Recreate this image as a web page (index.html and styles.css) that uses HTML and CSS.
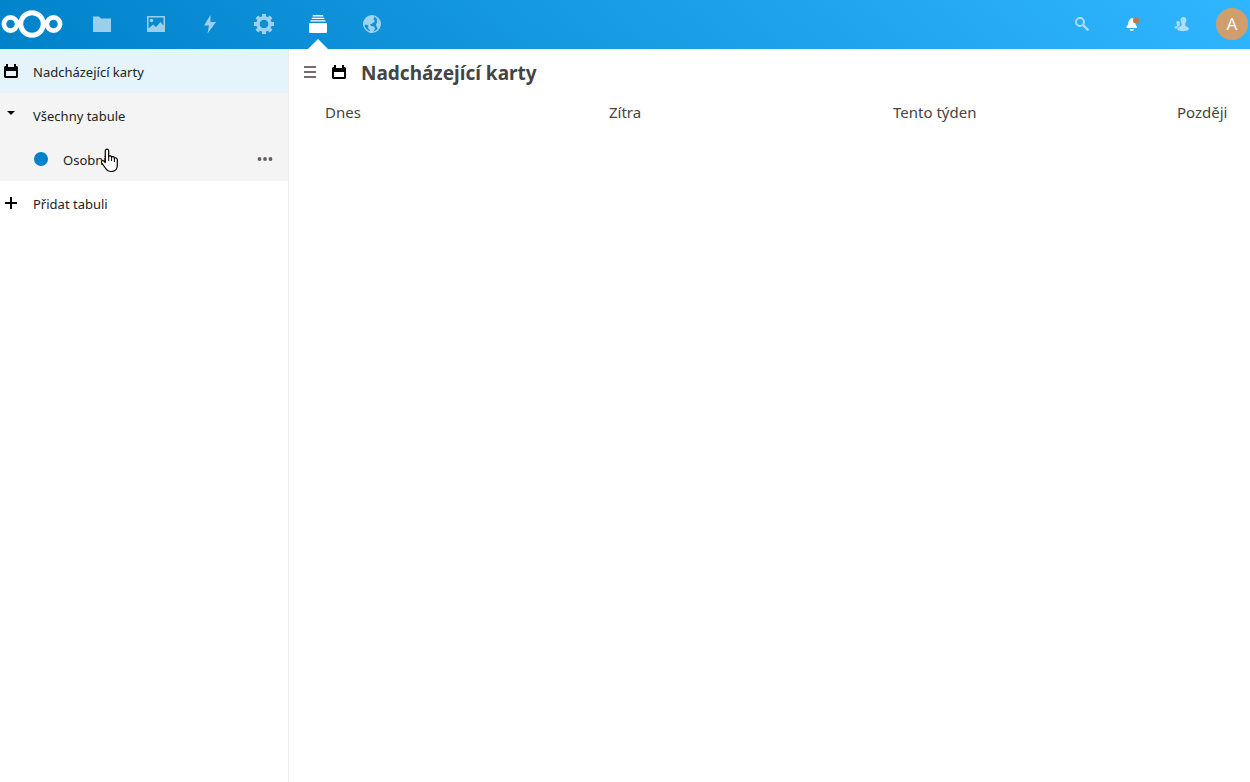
FILE: index.html
```html
<!DOCTYPE html>
<html lang="cs">
<head>
<meta charset="utf-8">
<title>Deck</title>
<link rel="stylesheet" href="styles.css">
</head>

<body>

<header class="header">
	<a class="logo" href="#" aria-label="Nextcloud">
		<svg width="62" height="30" viewBox="0 0 62 30" fill="none" stroke="#fff">
			<circle cx="31" cy="15" r="11.3" stroke-width="5"/>
			<circle cx="9.500" cy="15" r="6.600" stroke-width="4.700"/>
			<circle cx="52.500" cy="15" r="6.600" stroke-width="4.700"/>
		</svg>
	</a>

	<nav class="apps">
		<a class="app" href="#" aria-label="Soubory">
			<svg width="20" height="20" viewBox="0 0 20 20" fill="#fff"><path d="M1 2.500h6l2 2h10V18H1z"/></svg>
		</a>
		<a class="app" href="#" aria-label="Fotky">
			<svg width="20" height="20" viewBox="0 0 20 20" fill="#fff">
				<path fill-rule="evenodd" d="M1 2h18v16H1zM2.500 3.500v11L7 10.500l3 2.500 4.500-5 3 3.500v-8z"/>
				<circle cx="5.500" cy="6.500" r="1.800"/>
			</svg>
		</a>
		<a class="app" href="#" aria-label="Aktivita">
			<svg width="20" height="20" viewBox="0 0 20 20" fill="#fff"><path d="M10.500 1L4 11.500h5L7.500 19.500 16 8h-5.500z"/></svg>
		</a>
		<a class="app" href="#" aria-label="Nastavení">
			<svg width="20" height="20" viewBox="0 0 20 20" fill="#fff" stroke="#fff">
				<circle cx="10" cy="10" r="6" fill="none" stroke-width="3.400"/>
				<path stroke-width="4" fill="none" d="M10 0v3.500M10 16.500V20M0 10h3.500M16.500 10H20M2.900 2.900l2.300 2.300M14.800 14.800l2.300 2.300M2.900 17.100l2.300-2.300M14.800 5.200l2.300-2.300"/>
			</svg>
		</a>
		<a class="app active" href="#" aria-label="Deck">
			<svg width="20" height="20" viewBox="0 0 20 20" fill="#fff">
				<path d="M5 1h10l.5 1.500h-11z"/>
				<path d="M4 3.700h12l.5 1.300h-13z"/>
				<path d="M2.800 6.200h14.400l.5 1.300H2.300z"/>
				<rect x="1" y="9" width="18" height="10" rx="1"/>
			</svg>
		</a>
		<a class="app" href="#" aria-label="Web">
			<svg width="20" height="20" viewBox="0 0 20 20">
				<circle cx="10" cy="10" r="8.300" fill="none" stroke="#fff" stroke-width="1.400"/>
				<path fill="#fff" d="M11.500 2l.8 1.500-.8 2 1.500 1.500-2 2-3 1.500 1 1.500 3 .5 1 2-1.500 3-2 1.800-2-.8.5-2-2-2.500.5-2.500-3-1-2 1C1.500 8 3 4.500 6 2.800L8.500 2zM14.500 4L18 7.500v5l-2 3-1.200-2.500-.8-2.500 1.200-2.500z"/>
			</svg>
		</a>
	</nav>

	<div class="tools">
		<button class="tool dim" type="button" aria-label="Hledat">
			<svg width="16" height="16" viewBox="0 0 16 16" fill="none" stroke="#fff">
				<circle cx="6" cy="6" r="4" stroke-width="2"/>
				<path stroke-width="2.400" d="M9 9l5.500 5.500"/>
			</svg>
		</button>
		<button class="tool" type="button" aria-label="Upozornění">
			<svg width="16" height="16" viewBox="0 0 16 16">
				<path fill="#fff" d="M8 2C5.500 2.500 4.500 4.500 4.200 7.500c-.2 1.500-.7 2-1.700 3.300V12h10.500v-1.200C12 9.500 11.500 9 11.500 7.500 11.500 4.500 10.500 2.500 8 2zM5.500 13h4.500c0 1.200-1 2-2.200 2s-2.300-.8-2.300-2z"/>
				<circle cx="12" cy="4.500" r="3" fill="#c87443"/>
			</svg>
		</button>
		<button class="tool dim" type="button" aria-label="Kontakty">
			<svg width="16" height="16" viewBox="0 0 16 16" fill="#fff">
				<path d="M9.500 1C7.500 1 6.500 2.400 6.500 4c0 1.700.6 2.500 1 3.500v2L5 11c-1.500.7-2 2-1.500 3 2 1.500 9 1.500 11 0 .7-1.500.3-2.500-1-3l-2.300-1.300V7.500c.5-1 1.100-2 1.100-3.500 0-1.600-1-3-2.800-3z"/>
				<path d="M4 5C2.800 5 2.300 6 2.500 7.200l.5 1.500v1.300L1 10.500c-.7.500-.7 1.500 0 2h2l1-1.800 1.800-1.200v-3C5.500 5.500 5 5 4 5z"/>
			</svg>
		</button>
		<button class="avatar" type="button">A</button>
	</div>
</header>

<div class="content">

	<nav class="sidebar">
		<a class="entry selected" href="#">
			<span class="entry-icon">
				<svg width="16" height="16" viewBox="0 0 16 16"><path fill-rule="evenodd" d="M3 1h2v3h6V1h2v2h1l1 1v10l-1 1H2l-1-1V4l1-1h1zM3 8v5h10V8z"/></svg>
			</span>
			<span class="label">Nadcházející karty</span>
		</a>

		<div class="boards">
			<a class="entry" href="#">
				<span class="entry-icon">
					<svg width="16" height="16" viewBox="0 0 16 16"><path d="M4 4h8L8 8z"/></svg>
				</span>
				<span class="label">Všechny tabule</span>
			</a>
			<div class="board">
				<a class="entry board-link" href="#">
					<span class="bullet"></span>
					<span class="label">Osobní</span>
				</a>
				<button class="more" type="button" aria-label="Akce">
					<svg width="16" height="16" viewBox="0 0 16 16" fill="#685c64">
						<circle cx="2.500" cy="8" r="1.900"/><circle cx="8" cy="8" r="1.900"/><circle cx="13.500" cy="8" r="1.900"/>
					</svg>
				</button>
				<svg class="pointer" width="18" height="26" viewBox="0 0 18 26">
					<path fill="#fff" stroke="#000" stroke-width="1.200" stroke-linejoin="round" d="M4.300 14.500V3c0-2.500 3.400-2.500 3.400 0v5.500c.7-1 2.900-.8 2.900.7.700-1 2.800-.7 2.800 1 .8-.8 2.900-.3 2.900 1.500v5.300c0 4-2.500 6.500-6.300 6.500-3 0-4.500-1.500-6-4L.8 15c-1.300-2 1-3 2.200-1.800z"/>
					<path fill="none" stroke="#000" d="M7.700 8v5M10.600 9v4M13.400 10v4"/>
				</svg>
			</div>
		</div>

		<a class="entry" href="#">
			<span class="entry-icon">
				<svg width="16" height="16" viewBox="0 0 16 16"><path d="M7 2h2v5h5v2H9v5H7V9H2V7h5z"/></svg>
			</span>
			<span class="label">Přidat tabuli</span>
		</a>
	</nav>

	<main class="main">
		<div class="controls">
			<button class="menu-toggle" type="button" aria-label="Nabídka">
				<svg width="16" height="16" viewBox="0 0 16 16" fill="#7b6a70"><path d="M2 2h12v2H2zM2 7h12v2H2zM2 12h12v2H2z"/></svg>
			</button>
			<svg width="16" height="16" viewBox="0 0 16 16"><path fill-rule="evenodd" d="M3 1h2v3h6V1h2v2h1l1 1v10l-1 1H2l-1-1V4l1-1h1zM3 8v5h10V8z"/></svg>
			<h1 class="label">Nadcházející karty</h1>
		</div>

		<div class="columns">
			<section class="column"><h2>Dnes</h2></section>
			<section class="column"><h2>Zítra</h2></section>
			<section class="column"><h2>Tento týden</h2></section>
			<section class="column"><h2>Později</h2></section>
		</div>
	</main>

</div>

</body>
</html>
```
FILE: styles.css
```css
* {
	box-sizing: border-box;
}

body {
	margin: 0;
	min-height: 100vh;
	display: flex;
	flex-direction: column;
	font-family: "Noto Sans", "Open Sans", sans-serif;
	font-size: 13px;
	color: #222;
	background: #fff;
}

a {
	color: inherit;
	text-decoration: none;
}

button {
	padding: 0;
	border: 0;
	background: none;
	font: inherit;
	cursor: pointer;
}

svg {
	display: block;
	flex-shrink: 0;
}

.header {
	display: flex;
	align-items: center;
	height: 49px;
	background: linear-gradient(40deg, #0082c9 0%, #30b6ff 100%);
}

.logo {
	width: 75px;
	padding-left: 1px;
	padding-bottom: 1px;
}

.apps {
	display: flex;
}

.app {
	position: relative;
	display: flex;
	align-items: center;
	justify-content: center;
	width: 54px;
	height: 49px;
	padding-bottom: 1px;
}

.app svg {
	opacity: .6;
}

.app.active svg {
	opacity: 1;
}

.app.active:after {
	content: "";
	position: absolute;
	left: 17px;
	bottom: 0;
	border: 10px solid transparent;
	border-top: 0;
	border-bottom-color: #fff;
}

.tools {
	display: flex;
	align-items: center;
	margin-left: auto;
	padding-right: 2px;
	padding-bottom: 1px;
}

.tool {
	display: flex;
	align-items: center;
	justify-content: center;
	width: 50px;
	height: 48px;
}

.dim svg {
	opacity: .6;
}

.avatar {
	width: 32px;
	height: 32px;
	margin-left: 9px;
	border-radius: 50%;
	background: #d09e6d;
	color: #fff;
	font-size: 17px;
	line-height: 32px;
}

.content {
	flex: 1;
	display: flex;
}

.sidebar {
	flex: 0 0 289px;
	border-right: 1px solid #ededed;
}

.entry {
	display: flex;
	align-items: center;
	height: 44px;
	padding-left: 3px;
}

.entry-icon {
	width: 30px;
}

.label {
	padding-top: 2px;
}

.selected {
	background: #e5f3fb;
}

.boards {
	background: #f4f4f4;
}

.board {
	position: relative;
	display: flex;
}

.board-link {
	flex: 1;
	padding-left: 34px;
}

.bullet {
	width: 14px;
	height: 14px;
	margin-right: 15px;
	border-radius: 50%;
	background: #0082c9;
}

.more {
	display: flex;
	align-items: center;
	justify-content: center;
	width: 46px;
	height: 44px;
}

.pointer {
	position: absolute;
	left: 101px;
	top: 11px;
}

.main {
	flex: 1;
	min-width: 0;
	overflow: hidden;
	color: #444;
}

.controls {
	display: flex;
	align-items: center;
	height: 46px;
	padding-left: 13px;
}

.menu-toggle {
	margin-right: 13px;
}

.controls h1 {
	margin: 0 0 0 14px;
	font-size: 19px;
	line-height: 28px;
}

.columns {
	display: flex;
	gap: 14px;
	padding-left: 36px;
}

.column {
	flex: 0 0 270px;
}

.column h2 {
	margin: 0;
	font-size: 15px;
	font-weight: normal;
	line-height: 34px;
}
```
